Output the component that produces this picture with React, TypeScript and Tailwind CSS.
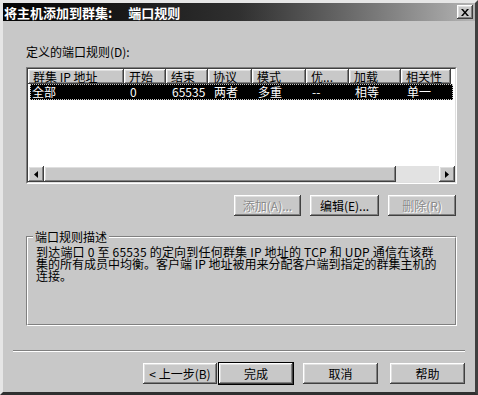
import React from "react";

const raised =
  "shadow-[inset_-1px_-1px_0_#404040,inset_1px_1px_0_#ffffff,inset_-2px_-2px_0_#808080,inset_2px_2px_0_#dfdfdf]";

const cols = ["群集 IP 地址", "开始", "结束", "协议", "模式", "优...", "加载", "相关性"];
const row = ["全部", "0", "65535", "两者", "多重", "--", "相等", "单一"];

const Btn = ({
  label,
  w,
  disabled,
  isDefault,
}: {
  label: string;
  w: string;
  disabled?: boolean;
  isDefault?: boolean;
}) => (
  <div
    className={`${w} h-[21px] flex items-center justify-center bg-[#c8c8c8] text-[12px] leading-none ${raised} ${
      isDefault ? "outline outline-1 outline-black" : ""
    } ${disabled ? "text-[#8a8a8a] [text-shadow:1px_1px_0_#ffffff]" : "text-black"}`}
  >
    {label}
  </div>
);

export default function App() {
  return (
    <div
      className="w-[478px] h-[395px] bg-[#c8c8c8] flex flex-col border-[3px] border-t-[#e6e6e6] border-l-[#e6e6e6] border-r-[#404040] border-b-[#303030] overflow-hidden"
      style={{ fontFamily: '"Noto Sans CJK SC", "Noto Sans", sans-serif' }}
    >
      {/* TITLE BAR */}
      <div className="h-[18px] flex items-center justify-between bg-gradient-to-r from-[#050505] via-[#303030] to-[#b4b4b4] pl-[1px] pr-[2px]">
        <span className="text-white font-bold text-[13px] leading-none whitespace-nowrap">
          将主机添加到群集:<span className="ml-[16px]">端口规则</span>
        </span>
        <div className={`w-[16px] h-[14px] bg-[#c8c8c8] flex items-center justify-center ${raised}`}>
          <svg width="8" height="7" viewBox="0 0 8 7">
            <path d="M0 0L2 0L4 2.5L6 0L8 0L5 3.5L8 7L6 7L4 4.5L2 7L0 7L3 3.5Z" fill="#000" />
          </svg>
        </div>
      </div>

      {/* BODY */}
      <div className="flex flex-col pl-[23px]">
        <div className="mt-[25px] text-[12px] leading-[12px] text-black">定义的端口规则(D):</div>

        {/* LIST */}
        <div className="mt-[9px] w-[431px] h-[117px] border border-t-[#808080] border-l-[#808080] border-r-white border-b-white">
          <div className="w-full h-full bg-white border border-t-[#404040] border-l-[#404040] border-r-[#dfdfdf] border-b-[#dfdfdf] flex flex-col">
            <div className="grid grid-cols-[96px_42px_42px_44px_54px_43px_52px_50px] h-[15px]">
              {cols.map((c) => (
                <div
                  key={c}
                  className={`bg-[#c8c8c8] ${raised} text-[12px] leading-[15px] pl-[5px] overflow-hidden whitespace-nowrap text-black`}
                >
                  {c}
                </div>
              ))}
            </div>
            <div className="ml-[2px] mr-[2px] grid grid-cols-[94px_42px_42px_44px_54px_43px_52px_50px] h-[16px] bg-black outline outline-1 outline-dotted outline-[#c8c8c8] -outline-offset-1">
              {row.map((c, i) => (
                <div key={i} className={`text-white text-[12px] leading-[16px] ${i === 0 ? "pl-[2px]" : "pl-[6px]"} whitespace-nowrap`}>
                  {c}
                </div>
              ))}
            </div>
            <div className="flex-1" />
            {/* H SCROLLBAR */}
            <div className="h-[16px] flex">
              <div className={`w-[16px] h-[16px] bg-[#c8c8c8] ${raised} flex items-center justify-center`}>
                <svg width="4" height="7" viewBox="0 0 4 7">
                  <path d="M4 0L0 3.5L4 7Z" fill="#000" />
                </svg>
              </div>
              <div className={`w-[352px] h-[16px] bg-[#c8c8c8] ${raised}`} />
              <div className="flex-1 bg-[#e2e2e2]" />
              <div className={`w-[16px] h-[16px] bg-[#c8c8c8] ${raised} flex items-center justify-center`}>
                <svg width="4" height="7" viewBox="0 0 4 7">
                  <path d="M0 0L4 3.5L0 7Z" fill="#000" />
                </svg>
              </div>
            </div>
          </div>
        </div>

        {/* LIST BUTTONS */}
        <div className="mt-[11px] flex gap-[9px] justify-end w-[431px] pr-[1px]">
          <Btn label="添加(A)..." w="w-[67px]" disabled />
          <Btn label="编辑(E)..." w="w-[69px]" />
          <Btn label="删除(R)" w="w-[68px]" disabled />
        </div>

        {/* GROUP BOX */}
        <div className="mt-[20px] w-[431px] h-[90px] border border-t-[#808080] border-l-[#808080] border-r-white border-b-white">
          <div className="w-full h-full border border-t-white border-l-white border-r-[#808080] border-b-[#808080] px-[8px]">
            <div className="-mt-[8px] -ml-[3px] px-[2px] bg-[#c8c8c8] w-fit text-[12px] leading-[13px] text-black">
              端口规则描述
            </div>
            <div className="mt-[3px] text-[12px] leading-[12px] text-black whitespace-nowrap">
              <div className="tracking-[0.2px]">到达端口 0 至 65535 的定向到任何群集 IP 地址的 TCP 和 UDP 通信在该群</div>
              <div>集的所有成员中均衡。客户端 IP 地址被用来分配客户端到指定的群集主机的</div>
              <div>连接。</div>
            </div>
          </div>
        </div>
      </div>

      {/* SEPARATOR */}
      <div className="mt-[24px] ml-[10px] w-[452px] h-[2px] border-t border-t-[#808080] border-b border-b-white" />

      {/* FOOTER BUTTONS */}
      <div className="mt-[11px] flex pl-[140px]">
        <Btn label="< 上一步(B)" w="w-[74px]" />
        <div className="ml-[2px]">
          <Btn label="完成" w="w-[74px]" isDefault />
        </div>
        <div className="ml-[10px]">
          <Btn label="取消" w="w-[75px]" />
        </div>
        <div className="ml-[12px]">
          <Btn label="帮助" w="w-[75px]" />
        </div>
      </div>
    </div>
  );
}
